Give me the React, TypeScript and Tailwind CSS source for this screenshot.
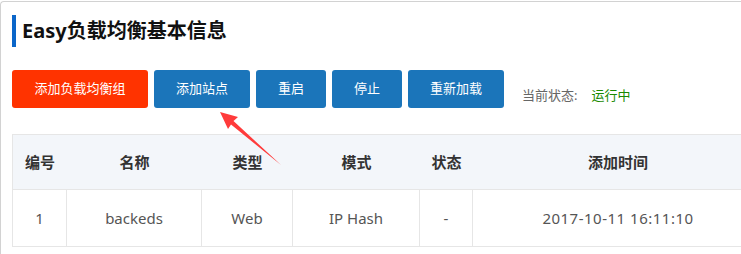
import React from "react";

const font = { fontFamily: '"Noto Sans", "Noto Sans CJK SC", sans-serif' };

export default function App() {
  const cols = "grid grid-cols-[54px_135px_91px_127px_53px_290px]";
  return (
    <div className="w-[741px] h-[254px] overflow-hidden bg-white relative" style={font}>
      <div className="mt-[1px] h-[253px] border-t border-l border-[#d2d2d2] rounded-tl-[4px] pl-[11px]">
        <div className="mt-[13px] flex items-center h-[32px]">
          <div className="w-[4px] h-[32px] bg-[#0b66c9]" />
          <div className="ml-[6px] text-[20px] font-bold text-[#111] leading-none">Easy负载均衡基本信息</div>
        </div>
        <div className="mt-[23px] flex items-center gap-[6px]">
          <button className="w-[136px] h-[38px] rounded-[3px] bg-[#ff3300] text-white text-[13px]">添加负载均衡组</button>
          <button className="w-[96px] h-[38px] rounded-[3px] bg-[#1b75ba] text-white text-[13px]">添加站点</button>
          <button className="w-[70px] h-[38px] rounded-[3px] bg-[#1b75ba] text-white text-[13px]">重启</button>
          <button className="w-[70px] h-[38px] rounded-[3px] bg-[#1b75ba] text-white text-[13px]">停止</button>
          <button className="w-[96px] h-[38px] rounded-[3px] bg-[#1b75ba] text-white text-[13px]">重新加载</button>
          <div className="ml-[12px] mt-[14px] flex text-[13px]">
            <span className="text-[#666]">当前状态:</span>
            <span className="ml-[14px] text-[#1a8a00]">运行中</span>
          </div>
        </div>
        <div className="mt-[26px] w-[750px] border-l border-t border-[#e6e6e6]">
          <div className={`${cols} h-[55px] bg-[#f3f6fa] border-b border-[#e6e6e6] text-[15px] font-bold text-[#333]`}>
            {["编号", "名称", "类型", "模式", "状态", "添加时间"].map((t) => (
              <div key={t} className="flex items-center justify-center">{t}</div>
            ))}
          </div>
          <div className={`${cols} h-[57px] border-b border-[#e6e6e6] text-[15px] text-[#555]`}>
            {["1", "backeds", "Web", "IP Hash", "-"].map((t, i) => (
              <div key={i} className="flex items-center justify-center border-r border-[#e6e6e6]">{t}</div>
            ))}
            <div className="flex items-center justify-center tracking-[0.5px]">2017-10-11 16:11:10</div>
          </div>
        </div>
      </div>
      <svg className="absolute left-0 top-0 pointer-events-none" width="741" height="254">
        <polygon points="220,112 238,117 233.5,121 281,165 231,124.5 228,129" fill="#ff3b3b" />
      </svg>
    </div>
  );
}
